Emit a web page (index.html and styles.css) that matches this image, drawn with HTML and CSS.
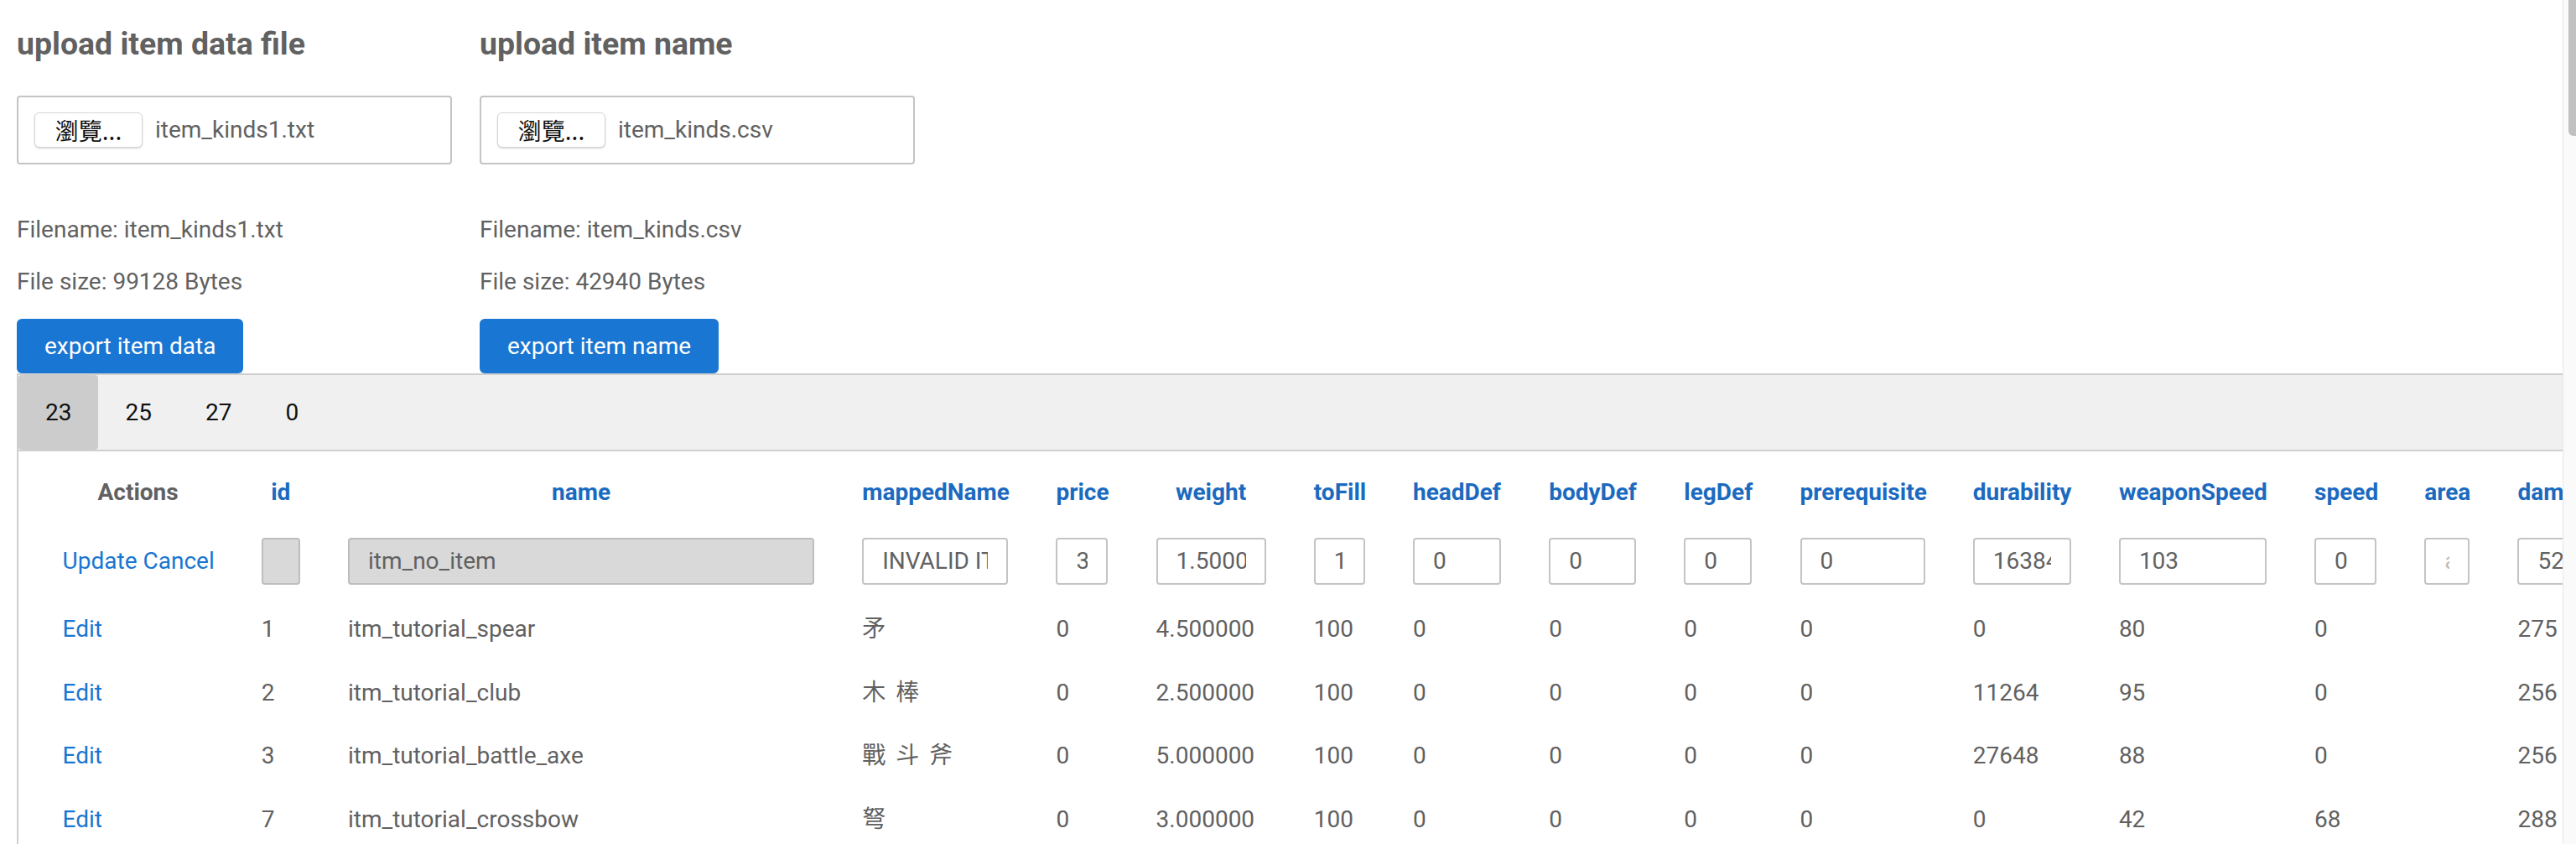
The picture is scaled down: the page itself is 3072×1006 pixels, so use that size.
FILE: index.html
```html
<!DOCTYPE html>
<html lang="zh-Hant">
<head>
<meta charset="utf-8">
<title>Item editor</title>
<link rel="stylesheet" href="styles.css">
</head>
<body>
<div class="viewport">
  <main class="page">
    <section class="uploads">
      <div class="upload-col">
        <h3 class="upload-title">upload item data file</h3>
        <div class="file-box"><span class="browse-btn">瀏覽...</span><span class="file-name">item_kinds1.txt</span></div>
        <div class="file-info">
          <p>Filename: item_kinds1.txt</p>
          <p>File size: 99128 Bytes</p>
        </div>
        <button class="export-btn" type="button">export item data</button>
      </div>
      <div class="upload-col">
        <h3 class="upload-title">upload item name</h3>
        <div class="file-box"><span class="browse-btn">瀏覽...</span><span class="file-name">item_kinds.csv</span></div>
        <div class="file-info">
          <p>Filename: item_kinds.csv</p>
          <p>File size: 42940 Bytes</p>
        </div>
        <button class="export-btn" type="button">export item name</button>
      </div>
    </section>

    <section class="data-panel">
      <nav class="tabs">
        <span class="tab tab-active">23</span>
        <span class="tab">25</span>
        <span class="tab">27</span>
        <span class="tab">0</span>
      </nav>
      <table class="grid">
        <thead>
          <tr class="head-row">
            <th class="w-actions th-plain">Actions</th>
            <th class="w-id">id</th>
            <th class="w-name">name</th>
            <th class="w-mapped">mappedName</th>
            <th class="w-price">price</th>
            <th class="w-weight">weight</th>
            <th class="w-tofill">toFill</th>
            <th class="w-head">headDef</th>
            <th class="w-body">bodyDef</th>
            <th class="w-leg">legDef</th>
            <th class="w-prereq">prerequisite</th>
            <th class="w-dur">durability</th>
            <th class="w-wspeed">weaponSpeed</th>
            <th class="w-speed">speed</th>
            <th class="w-area">area</th>
            <th class="w-dmg">damage</th>
          </tr>
        </thead>
        <tbody>
          <tr class="edit-row">
            <td><a class="link">Update</a> <a class="link">Cancel</a></td>
            <td><input class="field field-off field-tight" type="text" value="" disabled></td>
            <td><input class="field field-off" type="text" value="itm_no_item" disabled></td>
            <td><input class="field" type="text" value="INVALID ITEM"></td>
            <td><input class="field" type="text" value="3"></td>
            <td><input class="field" type="text" value="1.500000"></td>
            <td><input class="field" type="text" value="100"></td>
            <td><input class="field" type="text" value="0"></td>
            <td><input class="field" type="text" value="0"></td>
            <td><input class="field" type="text" value="0"></td>
            <td><input class="field" type="text" value="0"></td>
            <td><input class="field" type="text" value="16384"></td>
            <td><input class="field" type="text" value="103"></td>
            <td><input class="field" type="text" value="0"></td>
            <td><input class="field" type="text" placeholder="area"></td>
            <td><input class="field" type="text" value="520"></td>
          </tr>
          <tr class="data-row">
            <td><a class="link">Edit</a></td>
            <td>1</td><td>itm_tutorial_spear</td><td class="cjk">矛</td><td>0</td><td>4.500000</td><td>100</td>
            <td>0</td><td>0</td><td>0</td><td>0</td><td>0</td><td>80</td><td>0</td><td></td><td>275</td>
          </tr>
          <tr class="data-row">
            <td><a class="link">Edit</a></td>
            <td>2</td><td>itm_tutorial_club</td><td class="cjk">木 棒</td><td>0</td><td>2.500000</td><td>100</td>
            <td>0</td><td>0</td><td>0</td><td>0</td><td>11264</td><td>95</td><td>0</td><td></td><td>256</td>
          </tr>
          <tr class="data-row">
            <td><a class="link">Edit</a></td>
            <td>3</td><td>itm_tutorial_battle_axe</td><td class="cjk">戰 斗 斧</td><td>0</td><td>5.000000</td><td>100</td>
            <td>0</td><td>0</td><td>0</td><td>0</td><td>27648</td><td>88</td><td>0</td><td></td><td>256</td>
          </tr>
          <tr class="data-row">
            <td><a class="link">Edit</a></td>
            <td>7</td><td>itm_tutorial_crossbow</td><td class="cjk">弩</td><td>0</td><td>3.000000</td><td>100</td>
            <td>0</td><td>0</td><td>0</td><td>0</td><td>0</td><td>42</td><td>68</td><td></td><td>288</td>
          </tr>
        </tbody>
      </table>
    </section>
  </main>
  <div class="vscroll"><div class="vthumb"></div></div>
</div>
</body>
</html>
```

FILE: styles.css
```css
html, body {
  margin: 0;
  padding: 0;
  height: 1006px;
  overflow: hidden;
  background: #ffffff;
}

body {
  font-family: Roboto, "Noto Sans CJK TC", "Liberation Sans", sans-serif;
  font-size: 28px;
  color: #616161;
}

.viewport {
  display: flex;
  height: 1006px;
  overflow: hidden;
}

.page {
  flex: 1 1 auto;
  min-width: 0;
  overflow: hidden;
  padding-left: 20px;
}

/* ---------- upload area ---------- */
.uploads {
  display: flex;
  gap: 33px;
}

.upload-col {
  width: 519px;
  display: flex;
  flex-direction: column;
  align-items: flex-start;
}

.upload-title {
  margin: 30px 0 40px;
  font-size: 37.44px;
  line-height: 44px;
  font-weight: 700;
  color: #616161;
  white-space: nowrap;
}

.file-box {
  align-self: stretch;
  box-sizing: border-box;
  height: 82px;
  display: flex;
  align-items: center;
  gap: 15px;
  padding: 0 19px;
  border: 2px solid #c4c4c4;
  border-radius: 4px;
}

.browse-btn {
  box-sizing: border-box;
  width: 129px;
  height: 42px;
  display: flex;
  align-items: center;
  justify-content: center;
  background: #ffffff;
  border: 1px solid #d6d6d6;
  border-radius: 6px;
  box-shadow: 0 1px 2px rgba(0, 0, 0, 0.18);
  font-family: "Noto Sans CJK TC", sans-serif;
  font-size: 28px;
  color: #111111;
  line-height: 1;
}

.file-name {
  color: #616161;
  line-height: 42px;
}

.file-info {
  margin-top: 57px;
}

.file-info p {
  margin: 0;
  line-height: 42px;
  white-space: nowrap;
}

.file-info p + p {
  margin-top: 20px;
}

.export-btn {
  margin-top: 23px;
  height: 65px;
  padding: 0 33px;
  border: none;
  border-radius: 6px;
  background: #1976d2;
  color: #ffffff;
  font-family: Roboto, sans-serif;
  font-size: 28px;
  font-weight: 400;
  white-space: nowrap;
}

/* ---------- data panel ---------- */
.data-panel {
  border-top: 2px solid #cfcfcf;
  border-left: 2px solid #cfcfcf;
}

.tabs {
  display: flex;
  height: 89px;
  background: #f0f0f0;
  border-bottom: 2px solid #cfcfcf;
}

.tab {
  display: flex;
  align-items: center;
  padding: 0 32px;
  color: #111111;
  font-size: 28px;
}

.tab-active {
  background: #cccccc;
  border-radius: 4px;
}

.grid {
  table-layout: fixed;
  width: 3085.2px;
  border-collapse: separate;
  border-spacing: 0;
  margin: 11px 0 0 24px;
}

.grid th,
.grid td {
  padding: 0 28.6px;
  vertical-align: middle;
  white-space: nowrap;
  line-height: 42px;
  font-size: 28px;
  text-align: left;
  overflow: visible;
}

.grid th {
  font-weight: 700;
  color: #1b6ac0;
  text-align: center;
}

.grid th.th-plain {
  color: #616161;
}

.grid td.cjk {
  word-spacing: 5px;
}

.head-row { height: 76px; }
.edit-row { height: 87px; }
.data-row { height: 75.8px; }

.w-actions { width: 180px; }
.w-id { width: 46px; }
.w-name { width: 556px; }
.w-mapped { width: 174px; }
.w-price { width: 62px; }
.w-weight { width: 131px; }
.w-tofill { width: 61px; }
.w-head { width: 105px; }
.w-body { width: 104px; }
.w-leg { width: 81px; }
.w-prereq { width: 149px; }
.w-dur { width: 117px; }
.w-wspeed { width: 176px; }
.w-speed { width: 74px; }
.w-area { width: 54px; }
.w-dmg { width: 100px; }

.link {
  color: #1976d2;
  text-decoration: none;
  cursor: pointer;
}

.field {
  display: block;
  box-sizing: border-box;
  width: 100%;
  min-width: 0;
  height: 56px;
  margin: 0;
  padding: 0 22px;
  border: 2px solid #c4c4c4;
  border-radius: 4px;
  background: #ffffff;
  font-family: Roboto, "Noto Sans CJK TC", sans-serif;
  font-size: 28px;
  color: #616161;
  outline: none;
}

.field::placeholder {
  color: #bdbdbd;
}

.field-off {
  background: #d9d9d9;
  border-color: #bdbdbd;
  color: #616161;
}

.field-tight {
  padding: 0;
}

/* ---------- fake page scrollbar ---------- */
.vscroll {
  flex: 0 0 15px;
  display: flex;
  justify-content: flex-end;
  background: #fafafa;
  border-left: 1px solid #e6e6e6;
}

.vthumb {
  width: 9px;
  height: 162px;
  background: #c1c1c1;
  border-radius: 0 0 0 6px;
}
```
